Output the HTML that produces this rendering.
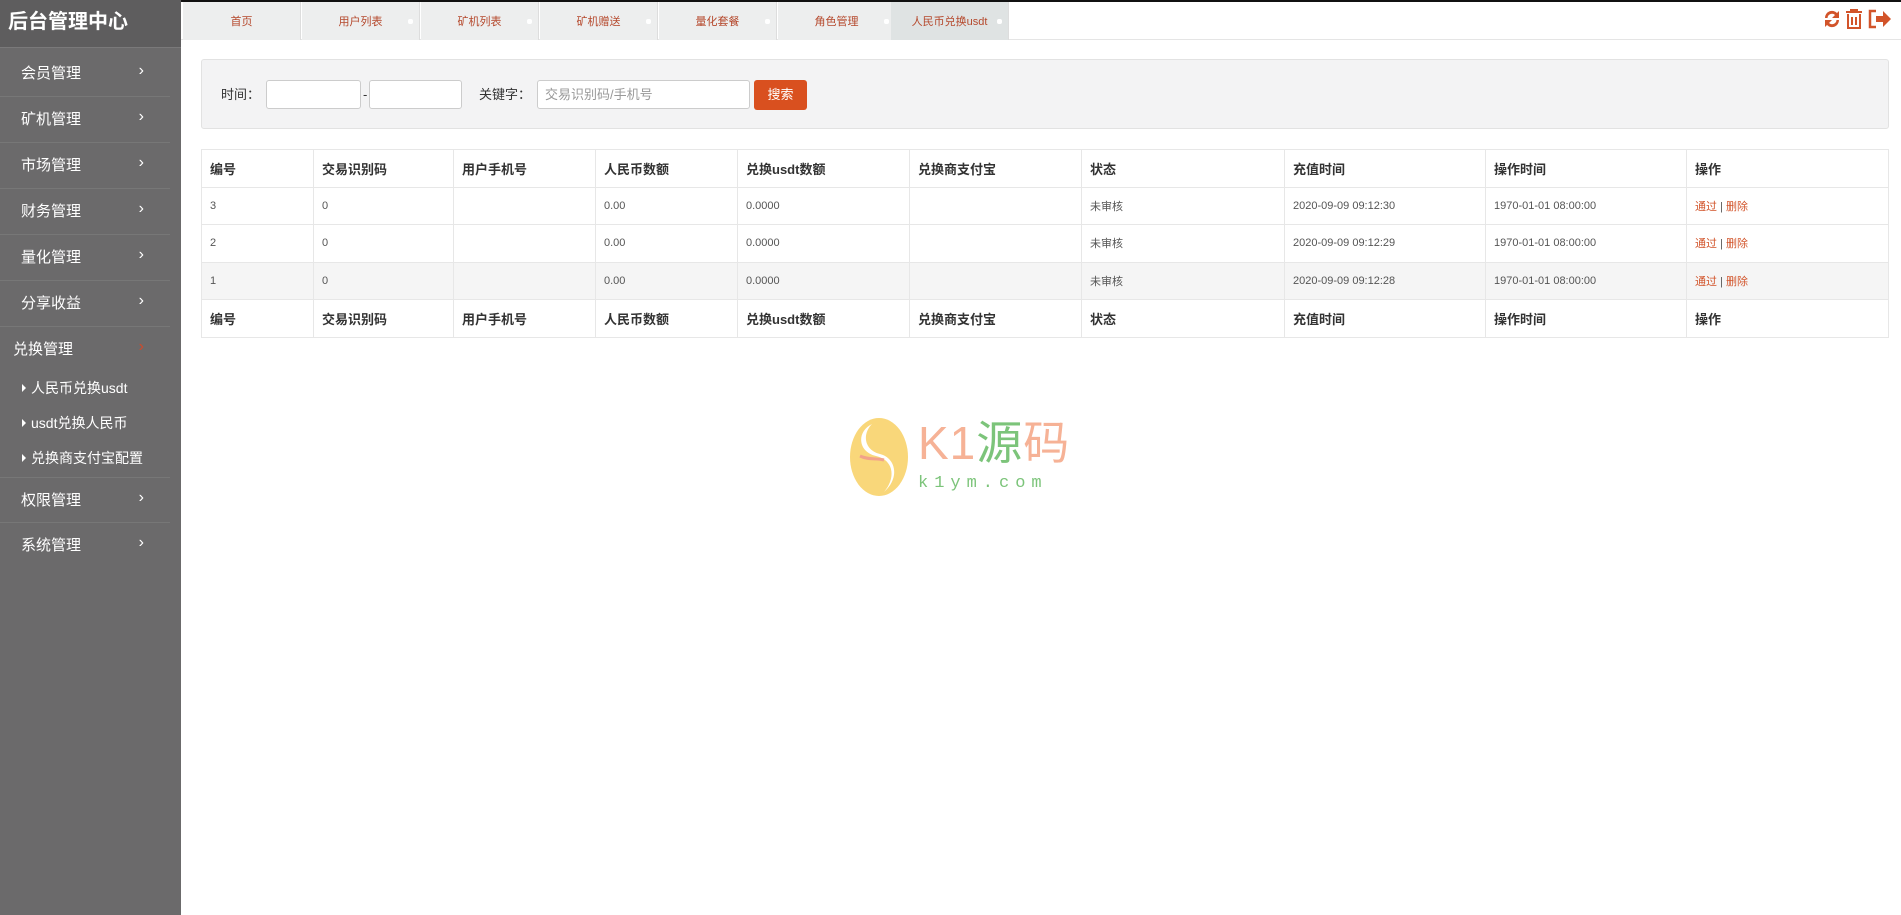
<!DOCTYPE html>
<html><head><meta charset="utf-8"><style>
*{margin:0;padding:0;box-sizing:border-box}
body{width:1901px;height:915px;overflow:hidden;background:#fff;font-family:"Liberation Sans","Noto Sans CJK SC",sans-serif;position:relative;color:#333}
.side{position:absolute;left:0;top:0;width:181px;height:915px;background:#6b6a6b;color:#fff}
.side h1{height:48px;line-height:44px;font-size:20px;font-weight:bold;padding-left:8px;background:#5e5d5e;border-bottom:1px solid #7a797a}
.mi{position:absolute;left:0;width:170px;height:46px;border-bottom:1px solid #777;font-size:15px;padding-left:21px;line-height:46px}
.mi b{position:absolute;right:26px;top:-3px;font-weight:normal;font-size:16px}
.sub{position:absolute;left:22px;font-size:14px}
.sub:before{content:"";display:inline-block;border-left:4px solid #fff;border-top:4px solid transparent;border-bottom:4px solid transparent;margin-right:5px;vertical-align:1px}
.top{position:absolute;left:181px;top:0;right:0;height:40px;border-bottom:1px solid #e5e5e5;border-top:2px solid #111}
.tab{position:absolute;top:0;height:38px;width:118px;background:#edeeee;border-right:1px solid #ddd;color:#b5482c;font-size:11px;text-align:center;line-height:40px}
.tab i{position:absolute;right:6px;top:17px;width:5px;height:5px;background:#fff;border-radius:2px}
.panel{position:absolute;left:201px;top:59px;width:1688px;height:70px;background:#f3f3f4;border:1px solid #e2e2e2;border-radius:3px}
.inp{position:absolute;height:29px;top:20px;background:#fff;border:1px solid #ccc;border-radius:3px;font-size:13px;color:#999;line-height:27px;padding-left:7px}
.lbl{position:absolute;top:20px;line-height:29px;font-size:13px;color:#333}
table{position:absolute;left:201px;top:149px;width:1688px;border-collapse:collapse;border:1px solid #e3e3e3;font-size:11px;color:#555}
td{border:1px solid #e7e7e7;height:37.5px;padding-left:8px}
tr.h td{font-weight:bold;font-size:13px;color:#333}
tr.g td{background:#f5f5f5}
a{color:#d2542a;text-decoration:none}
</style></head><body>
<div class="side">
<h1>后台管理中心</h1>
<div class="mi" style="top:51px">会员管理<b>›</b></div>
<div class="mi" style="top:97px">矿机管理<b>›</b></div>
<div class="mi" style="top:143px">市场管理<b>›</b></div>
<div class="mi" style="top:189px">财务管理<b>›</b></div>
<div class="mi" style="top:235px">量化管理<b>›</b></div>
<div class="mi" style="top:281px">分享收益<b>›</b></div>
<div class="mi" style="top:327px;padding-left:13px;border:none">兑换管理<b style="color:#d04a2a">›</b></div>
<div class="sub" style="top:378px">人民币兑换usdt</div>
<div class="sub" style="top:413px">usdt兑换人民币</div>
<div class="sub" style="top:448px">兑换商支付宝配置</div>
<div class="mi" style="top:477px;border-top:1px solid #777">权限管理<b>›</b></div>
<div class="mi" style="top:523px;border:none">系统管理<b>›</b></div>
</div>
<div class="top">
<div class="tab" style="left:2px">首页</div>
<div class="tab" style="left:121px">用户列表<i></i></div>
<div class="tab" style="left:240px">矿机列表<i></i></div>
<div class="tab" style="left:359px">矿机赠送<i></i></div>
<div class="tab" style="left:478px">量化套餐<i></i></div>
<div class="tab" style="left:597px">角色管理<i></i></div>
<div class="tab" style="left:710px;background:#dfe3e3">人民币兑换usdt<i></i></div>
<svg style="position:absolute;right:58px;top:6px" width="22" height="22" viewBox="0 0 22 22"><path d="M4 10a7 7 0 0 1 12-5l2-2v7h-7l3-3a4.5 4.5 0 0 0-7.5 3z M18 12a7 7 0 0 1-12 5l-2 2v-7h7l-3 3a4.5 4.5 0 0 0 7.5-3z" fill="#d2542a"/></svg>
<svg style="position:absolute;right:37px;top:6px" width="20" height="22" viewBox="0 0 20 22"><path d="M2 4h16M7 4V2h6v2M4 6v14h12V6M8 9v8M12 9v8" fill="none" stroke="#d2542a" stroke-width="2"/></svg>
<svg style="position:absolute;right:10px;top:7px" width="24" height="20" viewBox="0 0 24 20"><path d="M9 2H3v16h6" fill="none" stroke="#d2542a" stroke-width="2.5"/><path d="M9 7h7V2l8 8-8 8v-5H9z" fill="#d2542a"/></svg>
</div>
<div class="panel">
<div class="lbl" style="left:19px">时间：</div>
<div class="inp" style="left:64px;width:95px"></div>
<div class="lbl" style="left:161px">-</div>
<div class="inp" style="left:167px;width:93px"></div>
<div class="lbl" style="left:277px">关键字：</div>
<div class="inp" style="left:335px;width:213px">交易识别码/手机号</div>
<div style="position:absolute;left:552px;top:20px;width:53px;height:30px;background:#d9501f;border-radius:3px;color:#fff;font-size:13px;text-align:center;line-height:30px">搜索</div>
</div>
<table>
<colgroup><col style="width:112px"><col style="width:140px"><col style="width:142px"><col style="width:142px"><col style="width:172px"><col style="width:172px"><col style="width:203px"><col style="width:201px"><col style="width:201px"><col></colgroup>
<tr class="h"><td>编号</td><td>交易识别码</td><td>用户手机号</td><td>人民币数额</td><td>兑换usdt数额</td><td>兑换商支付宝</td><td>状态</td><td>充值时间</td><td>操作时间</td><td>操作</td></tr>
<tr><td>3</td><td>0</td><td></td><td>0.00</td><td>0.0000</td><td></td><td>未审核</td><td>2020-09-09 09:12:30</td><td>1970-01-01 08:00:00</td><td><a>通过</a> | <a>删除</a></td></tr>
<tr><td>2</td><td>0</td><td></td><td>0.00</td><td>0.0000</td><td></td><td>未审核</td><td>2020-09-09 09:12:29</td><td>1970-01-01 08:00:00</td><td><a>通过</a> | <a>删除</a></td></tr>
<tr class="g"><td>1</td><td>0</td><td></td><td>0.00</td><td>0.0000</td><td></td><td>未审核</td><td>2020-09-09 09:12:28</td><td>1970-01-01 08:00:00</td><td><a>通过</a> | <a>删除</a></td></tr>
<tr class="h"><td>编号</td><td>交易识别码</td><td>用户手机号</td><td>人民币数额</td><td>兑换usdt数额</td><td>兑换商支付宝</td><td>状态</td><td>充值时间</td><td>操作时间</td><td>操作</td></tr>
</table>
<svg style="position:absolute;left:850px;top:418px" width="58" height="78" viewBox="0 0 58 78"><ellipse cx="29" cy="39" rx="29" ry="39" fill="#f9d77a"/><path d="M22 6C6 14 8 34 26 38C44 42 46 60 34 74C50 60 46 40 30 36C14 32 12 16 22 6z" fill="#fff"/><path d="M10 38c8 4 16 2 24 4" stroke="#f2a28a" stroke-width="3" fill="none"/></svg>
<div style="position:absolute;left:918px;top:418px;font-size:46px;line-height:50px;color:#f6b296;letter-spacing:1px">K1<span style="color:#7cc47a">源</span>码</div>
<div style="position:absolute;left:918px;top:474px;font-size:17px;color:#7cc47a;letter-spacing:6px;font-family:'Liberation Mono',monospace">k1ym.com</div>
</body></html>
